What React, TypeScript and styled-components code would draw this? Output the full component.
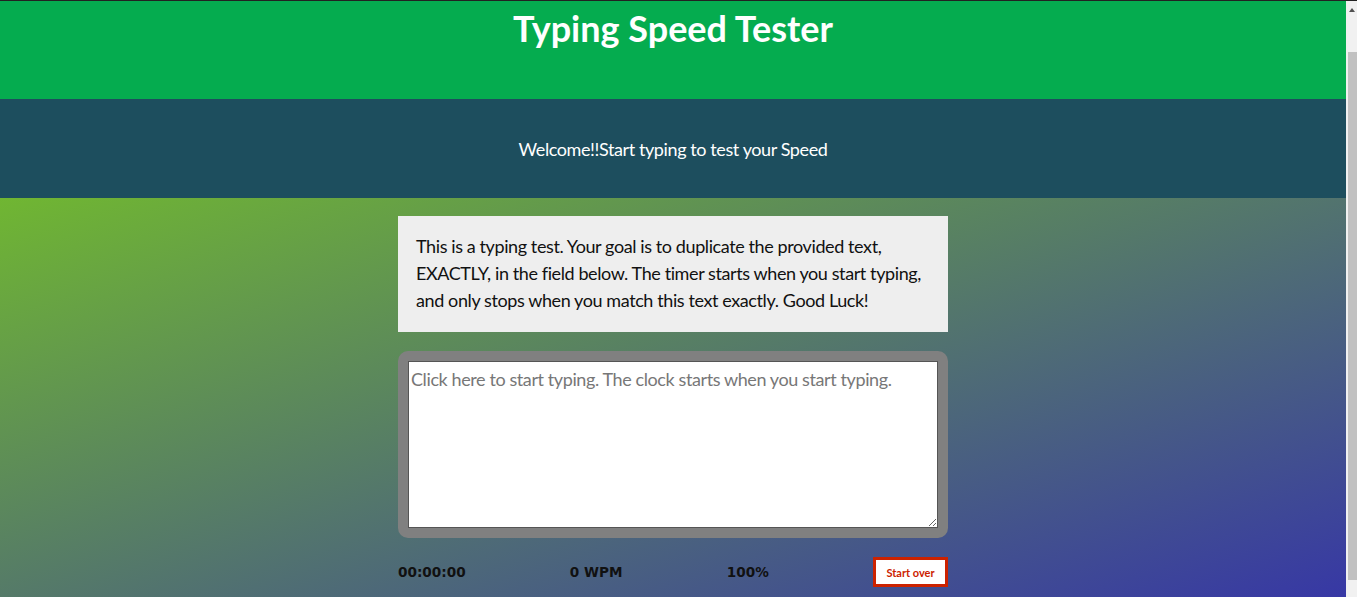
import React, { useState } from "react";
import styled, { createGlobalStyle } from "styled-components";

const GlobalStyle = createGlobalStyle`
  html, body {
    margin: 0;
    padding: 0;
  }
  body {
    font-family: "Lato", "Open Sans", sans-serif;
    border-top: 1px solid #222;
    overflow: hidden;
  }
`;

const Page = styled.div`
  display: flex;
  flex-direction: column;
  min-height: 640px;
  margin-right: 11px;
`;

// stand-in for the browser's page scrollbar on the right edge
const ScrollTrack = styled.div`
  position: fixed;
  top: 1px;
  right: 0;
  bottom: 0;
  width: 11px;
  background: #f1f1f1;
`;

const ScrollArrow = styled.div`
  position: absolute;
  top: 7px;
  left: 3px;
  width: 0;
  height: 0;
  border-left: 3px solid transparent;
  border-right: 3px solid transparent;
  border-bottom: 4px solid #505050;
`;

const ScrollThumb = styled.div`
  position: absolute;
  top: 51px;
  left: 2px;
  right: 0;
  height: 528px;
  background: #c1c1c1;
`;

const Header = styled.header`
  background: #05ac4f;
  height: 98px;
  display: flex;
  justify-content: center;
`;

const Title = styled.h1`
  margin: 5px 0 0;
  color: #fff;
  font-size: 36px;
  font-weight: 700;
  line-height: 44px;
`;

const Intro = styled.div`
  background: #1d4e5e;
  height: 99px;
  display: flex;
  align-items: center;
  justify-content: center;
  color: #fff;
  font-size: 18px;
  letter-spacing: -0.4px;
`;

const Main = styled.main`
  flex: 1;
  background: linear-gradient(to bottom right, #70b632, #3431ab);
  padding: 18px 0 40px;
`;

const Column = styled.div`
  width: 550px;
  margin: 0 auto;
  display: flex;
  flex-direction: column;
  gap: 19px;
`;

const TestText = styled.p`
  margin: 0;
  background: #eeeeee;
  padding: 17px 18px 18px;
  font-size: 18px;
  line-height: 27px;
  letter-spacing: -0.4px;
  color: #111;
`;

const AreaWrap = styled.div`
  background: #808080;
  border-radius: 10px;
  padding: 10px;
  display: flex;
`;

const TypingArea = styled.textarea`
  flex: 1;
  box-sizing: border-box;
  height: 167px;
  border: 1px solid #555;
  padding: 6px 2px;
  font-family: "Lato", "Open Sans", sans-serif;
  font-size: 18px;
  line-height: 22px;
  letter-spacing: -0.4px;
  &::placeholder {
    color: #777;
  }
`;

const Stats = styled.div`
  display: flex;
  justify-content: space-between;
  align-items: center;
`;

const Stat = styled.span`
  font-family: "DejaVu Sans", Verdana, sans-serif;
  font-weight: 700;
  font-size: 13.6px;
  color: #111;
`;

const ResetButton = styled.button`
  width: 75px;
  height: 30px;
  padding: 0;
  background: #fff;
  border: 3px solid #cc2200;
  color: #cc2200;
  font-family: "Lato", "Open Sans", sans-serif;
  font-size: 11px;
  font-weight: 700;
  cursor: pointer;
`;

export default function App() {
  const [text, setText] = useState("");

  return (
    <>
      <GlobalStyle />
      <Page>
        <Header>
          <Title>Typing Speed Tester</Title>
        </Header>
        <Intro>Welcome!!Start typing to test your Speed</Intro>
        <Main>
          <Column>
            <TestText>
              This is a typing test. Your goal is to duplicate the provided text, EXACTLY, in the
              field below. The timer starts when you start typing, and only stops when you match
              this text exactly. Good Luck!
            </TestText>
            <AreaWrap>
              <TypingArea
                value={text}
                onChange={(e) => setText(e.target.value)}
                placeholder="Click here to start typing. The clock starts when you start typing."
              />
            </AreaWrap>
            <Stats>
              <Stat>00:00:00</Stat>
              <Stat>0 WPM</Stat>
              <Stat>100%</Stat>
              <ResetButton onClick={() => setText("")}>Start over</ResetButton>
            </Stats>
          </Column>
        </Main>
      </Page>
      <ScrollTrack>
        <ScrollArrow />
        <ScrollThumb />
      </ScrollTrack>
    </>
  );
}
